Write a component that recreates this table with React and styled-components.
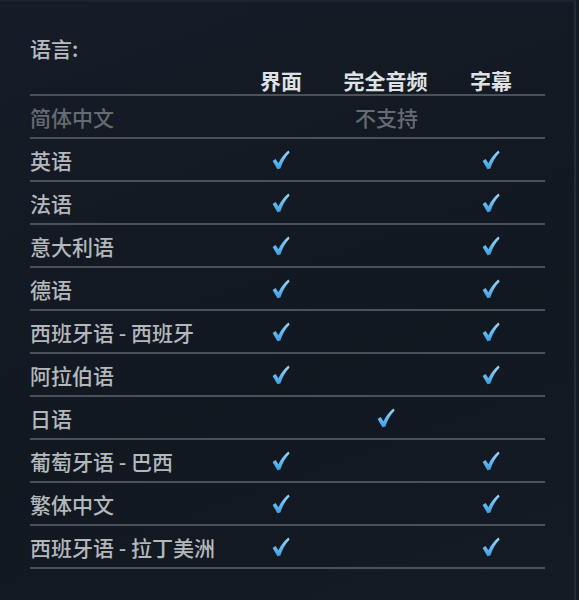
import React from "react";
import styled, { createGlobalStyle } from "styled-components";

const Global = createGlobalStyle`
  html, body {
    margin: 0;
    padding: 0;
    background: #131922;
  }
  body {
    font-family: "Noto Sans CJK SC", "Noto Sans", sans-serif;
  }
`;

const Page = styled.div`
  width: 576px;
  height: 600px;
  box-sizing: border-box;
  border-right: 2px solid #222b37;
  border-top: 2px solid #1c2430;
  background: linear-gradient(160deg, #161c27 0%, #121820 60%, #141b25 100%);
  padding: 33px 0 0 30px;
`;

const Title = styled.div`
  font-size: 21px;
  line-height: 26px;
  color: #b8bcc0;
  font-weight: 500;
`;

const Table = styled.div`
  width: 515px;
  display: grid;
  grid-template-columns: 198px 106px 103px 1fr;
`;

const Row = styled.div`
  display: contents;
`;

const Cell = styled.div`
  height: ${(p) => (p.$head ? "28px" : "41px")};
  padding-top: ${(p) => (p.$head ? "5px" : "0")};
  border-bottom: 2px solid #4b5159;
  display: flex;
  align-items: center;
  justify-content: ${(p) => (p.$lang ? "flex-start" : "center")};
  font-size: 21px;
  white-space: nowrap;
  color: ${(p) => (p.$head ? "#dfe1e3" : p.$dim ? "#656b72" : "#b4b8bc")};
  font-weight: ${(p) => (p.$head ? 700 : 500)};
  grid-column: ${(p) => p.$span || "auto"};
`;

const Check = () => (
  <svg width="18" height="20" viewBox="0 0 18 20">
    <defs>
      <linearGradient id="ck" x1="0" y1="0" x2="0" y2="1">
        <stop offset="0" stopColor="#9ad8fc" />
        <stop offset="1" stopColor="#3b9ee2" />
      </linearGradient>
    </defs>
    <path
      d="M0.6 11 L3.6 9 L6.4 13.2 C9 8.4 12.2 4 16.4 0.6 L17.6 2.4 C13.6 6.4 10.6 11.6 8.4 18.6 L5.4 19.2 Z"
      fill="url(#ck)"
    />
  </svg>
);

const langs = [
  ["英语", true, false, true],
  ["法语", true, false, true],
  ["意大利语", true, false, true],
  ["德语", true, false, true],
  ["西班牙语 - 西班牙", true, false, true],
  ["阿拉伯语", true, false, true],
  ["日语", false, true, false],
  ["葡萄牙语 - 巴西", true, false, true],
  ["繁体中文", true, false, true],
  ["西班牙语 - 拉丁美洲", true, false, true],
];

export default function App() {
  return (
    <Page>
      <Global />
      <Title>语言:</Title>
      <Table>
        <Row>
          <Cell $head $lang />
          <Cell $head>界面</Cell>
          <Cell $head>完全音频</Cell>
          <Cell $head>字幕</Cell>
        </Row>
        <Row>
          <Cell $lang $dim>简体中文</Cell>
          <Cell $dim $span="span 3">不支持</Cell>
        </Row>
        {langs.map(([name, ui, audio, sub]) => (
          <Row key={name}>
            <Cell $lang>{name}</Cell>
            <Cell>{ui && <Check />}</Cell>
            <Cell>{audio && <Check />}</Cell>
            <Cell>{sub && <Check />}</Cell>
          </Row>
        ))}
      </Table>
    </Page>
  );
}
